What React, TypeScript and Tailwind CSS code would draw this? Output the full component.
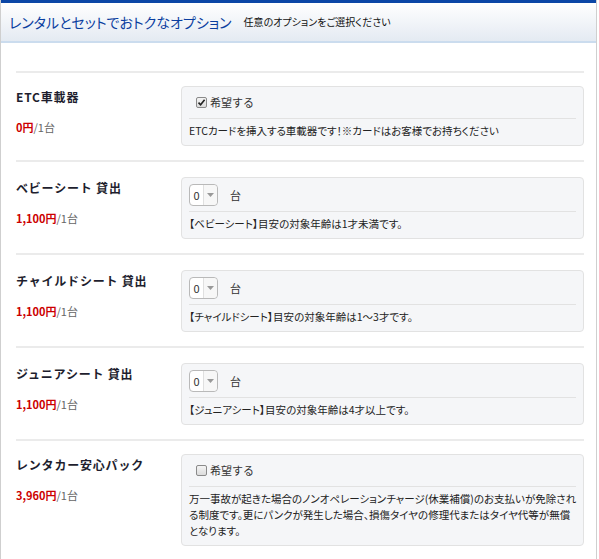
import React from "react";

type Option = {
  title: string;
  price: string;
  kind: "check" | "select";
  checked?: boolean;
  desc: React.ReactNode;
};

const options: Option[] = [
  {
    title: "ETC車載器",
    price: "0円",
    kind: "check",
    checked: true,
    desc: "ETCカードを挿入する車載器です！※カードはお客様でお持ちください",
  },
  {
    title: "ベビーシート 貸出",
    price: "1,100円",
    kind: "select",
    desc: "【ベビーシート】目安の対象年齢は1才未満です。",
  },
  {
    title: "チャイルドシート 貸出",
    price: "1,100円",
    kind: "select",
    desc: "【チャイルドシート】目安の対象年齢は1～3才です。",
  },
  {
    title: "ジュニアシート 貸出",
    price: "1,100円",
    kind: "select",
    desc: "【ジュニアシート】目安の対象年齢は4才以上です。",
  },
  {
    title: "レンタカー安心パック",
    price: "3,960円",
    kind: "check",
    desc: (
      <>
        万一事故が起きた場合のノンオペレーションチャージ(休業補償)のお支払いが免除され
        <br />
        る制度です。更にパンクが発生した場合、損傷タイヤの修理代またはタイヤ代等が無償
        <br />
        となります。
      </>
    ),
  },
];

function Checkbox({ checked }: { checked?: boolean }) {
  return (
    <span className="w-[11px] h-[11px] rounded-[2px] border border-[#8a8a8a] bg-linear-to-b from-[#f4f4f4] to-[#dcdcdc] flex items-center justify-center">
      {checked && (
        <svg width="9" height="9" viewBox="0 0 9 9">
          <path d="M1.5 4.6 L3.6 6.8 L7.6 1.8" fill="none" stroke="#222" strokeWidth="1.6" />
        </svg>
      )}
    </span>
  );
}

function Select() {
  return (
    <span className="h-[22px] w-[29px] rounded-[4px] border border-[#b9b9b9] bg-white flex items-center">
      <span className="w-[13px] text-center text-[11px] text-[#333]">0</span>
      <span className="h-full border-l border-[#e0e0e0] flex-1 flex items-center justify-center bg-[#f7f7f7] rounded-r-[4px]">
        <svg width="7" height="4" viewBox="0 0 7 4">
          <path d="M0 0 H7 L3.5 4 Z" fill="#999" />
        </svg>
      </span>
    </span>
  );
}

export default function App() {
  return (
    <div
      className="w-[597px] bg-white text-[#222]"
      style={{ fontFamily: '"Noto Sans CJK JP", "Noto Sans", sans-serif' }}
    >
      <div className="border-x border-b border-[#cfcfcf]">
        <div className="border-t-[3px] border-[#0b46a6] h-[43px] flex items-center px-[8px] gap-[12px] bg-linear-to-b from-white to-[#e4eaf2] border-b-2 border-b-[#cbdcee] [font-feature-settings:'palt']">
          <span className="text-[14px] text-[#0b3ea0] leading-none">
            レンタルとセットでおトクなオプション
          </span>
          <span className="text-[10px] text-[#111] leading-none">
            任意のオプションをご選択ください
          </span>
        </div>
        <div className="pl-[15px] pr-[12px] pt-[28px]">
          {options.map((o) => (
            <div
              key={o.title}
              className={`border-t-2 border-[#ebebeb] flex ${
                o.kind === "select" ? "pt-[15px] pb-[14px]" : "pt-[13px] pb-[14px]"
              }`}
            >
              <div className="w-[165px] shrink-0 pt-[3px]">
                <div className="text-[12px] font-bold leading-[16px] tracking-[0.8px] text-[#1e1e2e]">
                  {o.title}
                </div>
                <div className="mt-[15px] text-[11px] leading-[14px]">
                  <span className="text-[#cc0000] font-bold">{o.price}</span>
                  <span className="text-[#666]">/1台</span>
                </div>
              </div>
              <div
                className={`flex-1 rounded-[4px] border border-[#e2e2e2] bg-[#f5f6f8] px-[7px] pb-[6px] ${
                  o.kind === "select" ? "pt-[6px]" : "pt-[5px]"
                }`}
              >
                {o.kind === "check" ? (
                  <div className="h-[20px] mb-[6px] flex items-center gap-[3px] pl-[7px] text-[11px] text-[#333]">
                    <Checkbox checked={o.checked} />
                    <span>希望する</span>
                  </div>
                ) : (
                  <div className="h-[22px] mb-[5px] flex items-center gap-[12px] text-[11px] text-[#333]">
                    <Select />
                    <span>台</span>
                  </div>
                )}
                <div className="border-t border-[#e2e2e2]" />
                <div className="pt-[4px] text-[10.5px] leading-[16px] text-[#222] whitespace-nowrap [font-feature-settings:'palt']">
                  {o.desc}
                </div>
              </div>
            </div>
          ))}
        </div>
      </div>
    </div>
  );
}
